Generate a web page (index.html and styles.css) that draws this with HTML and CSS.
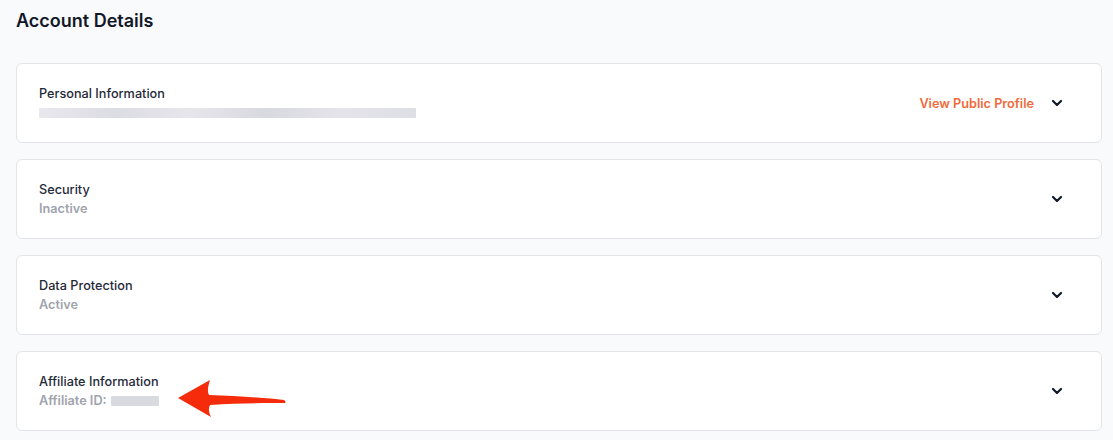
FILE: index.html
```html
<!DOCTYPE html>
<html>
<head>
<meta charset="utf-8">
<link rel="stylesheet" href="styles.css">
</head>
<body>
<div class="page">
  <h1 class="title">Account Details</h1>
  <div class="list">
    <div class="card">
      <div class="info">
        <div class="label">Personal Information</div>
        <div class="sub"><span class="blur wide"></span></div>
      </div>
      <div class="actions">
        <a class="link">View Public Profile</a>
        <svg class="chev" width="12" height="12" viewBox="0 0 12 12"><path d="M2 4l4 4 4-4" fill="none" stroke="#111827" stroke-width="2.2" stroke-linecap="round" stroke-linejoin="round"/></svg>
      </div>
    </div>
    <div class="card">
      <div class="info">
        <div class="label">Security</div>
        <div class="sub">Inactive</div>
      </div>
      <div class="actions">
        <svg class="chev" width="12" height="12" viewBox="0 0 12 12"><path d="M2 4l4 4 4-4" fill="none" stroke="#111827" stroke-width="2.2" stroke-linecap="round" stroke-linejoin="round"/></svg>
      </div>
    </div>
    <div class="card">
      <div class="info">
        <div class="label">Data Protection</div>
        <div class="sub">Active</div>
      </div>
      <div class="actions">
        <svg class="chev" width="12" height="12" viewBox="0 0 12 12"><path d="M2 4l4 4 4-4" fill="none" stroke="#111827" stroke-width="2.2" stroke-linecap="round" stroke-linejoin="round"/></svg>
      </div>
    </div>
    <div class="card annotated">
      <div class="info">
        <div class="label">Affiliate Information</div>
        <div class="sub">Affiliate ID: <span class="blur small"></span></div>
      </div>
      <div class="actions">
        <svg class="chev" width="12" height="12" viewBox="0 0 12 12"><path d="M2 4l4 4 4-4" fill="none" stroke="#111827" stroke-width="2.2" stroke-linecap="round" stroke-linejoin="round"/></svg>
      </div>
      <svg class="arrow" width="112" height="40" viewBox="0 0 112 40"><path d="M1 19 L33 1 C31 8 30 12 32 16 C60 17 90 19 107 21 C109 22 109 24 107 24 C90 24 60 24 33 26 C31 30 32 34 34 38 Z" fill="#f52c0c"/></svg>
    </div>
  </div>
</div>
</body>
</html>
```
FILE: styles.css
```css
html, body {
  margin: 0;
  padding: 0;
  background: #f9fafb;
  font-family: Inter, "Noto Sans", sans-serif;
  color: #1f2937;
}
.page {
  padding: 10px 11px 0 16px;
}
.title {
  margin: 0 0 31px 0;
  font-size: 18px;
  font-weight: 600;
  line-height: 22px;
  color: #111827;
}
.list {
  display: flex;
  flex-direction: column;
  gap: 16px;
}
.card {
  position: relative;
  height: 80px;
  box-sizing: border-box;
  background: #fff;
  border: 1px solid #e2e4e8;
  border-radius: 6px;
  display: flex;
  align-items: center;
  justify-content: space-between;
  padding: 0 38px 0 22px;
}
.info {
  display: flex;
  flex-direction: column;
}
.label {
  font-size: 12.7px;
  line-height: 19px;
  font-weight: 500;
  color: #1f2937;
}
.sub {
  font-size: 12.7px;
  line-height: 19px;
  min-height: 19px;
  font-weight: 600;
  color: #a0a3ad;
  display: flex;
  align-items: center;
}
.blur {
  display: inline-block;
  height: 10px;
  background: linear-gradient(90deg, #e8e8ed 0%, #dcdce3 20%, #e6e6eb 40%, #d8d8df 60%, #e4e4ea 80%, #dedee5 100%);
  border-radius: 1px;
}
.blur.wide {
  width: 377px;
  margin-top: 1px;
}
.blur.small {
  width: 48px;
  margin-left: 4px;
  background: #d9d9e0;
}
.actions {
  display: flex;
  align-items: center;
  gap: 17px;
}
.link {
  color: #ef6b3b;
  font-size: 12.7px;
  font-weight: 600;
  cursor: pointer;
}
.chev {
  display: block;
}
.arrow {
  position: absolute;
  left: 160px;
  top: 27px;
}
```
